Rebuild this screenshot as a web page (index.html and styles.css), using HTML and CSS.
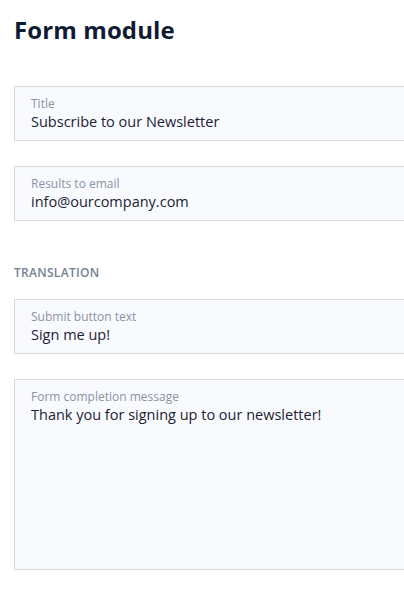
FILE: index.html
```html
<!DOCTYPE html>
<html>
<head>
<meta charset="utf-8">
<link rel="stylesheet" href="styles.css">
</head>
<body>
<div class="page">
  <h1 class="title">Form module</h1>
  <div class="field">
    <div class="label">Title</div>
    <div class="value">Subscribe to our Newsletter</div>
  </div>
  <div class="field">
    <div class="label">Results to email</div>
    <div class="value">info@ourcompany.com</div>
  </div>
  <div class="section">TRANSLATION</div>
  <div class="field">
    <div class="label">Submit button text</div>
    <div class="value">Sign me up!</div>
  </div>
  <div class="field tall">
    <div class="label">Form completion message</div>
    <div class="value">Thank you for signing up to our newsletter!</div>
  </div>
</div>
</body>
</html>
```
FILE: styles.css
```css
html, body { margin: 0; padding: 0; background: #fff; overflow: hidden; }
body { font-family: "Open Sans", sans-serif; color: #1b2235; }
.page { padding: 15px 0 0 14px; width: 390px; overflow: hidden; }
.title { margin: 0; font-size: 24px; font-weight: 700; color: #0f1b33; line-height: 30px; letter-spacing: 0.1px; }
.field {
  margin-top: 25px;
  border: 1px solid #d2d7de;
  border-right: none;
  border-radius: 2px 0 0 2px;
  background: #f9fafd;
  padding: 9px 16px 0 16px;
  height: 44px;
}
.title + .field { margin-top: 41px; }
.field.tall { height: 180px; }
.label { font-size: 12px; color: #8a93a3; line-height: 16px; }
.value { font-size: 14.5px; line-height: 20px; color: #1b2235; }
.section { margin-top: 44px; font-size: 12px; font-weight: 600; color: #76818f; letter-spacing: 0.3px; line-height: 16px; }
.section + .field { margin-top: 18px; }
```
